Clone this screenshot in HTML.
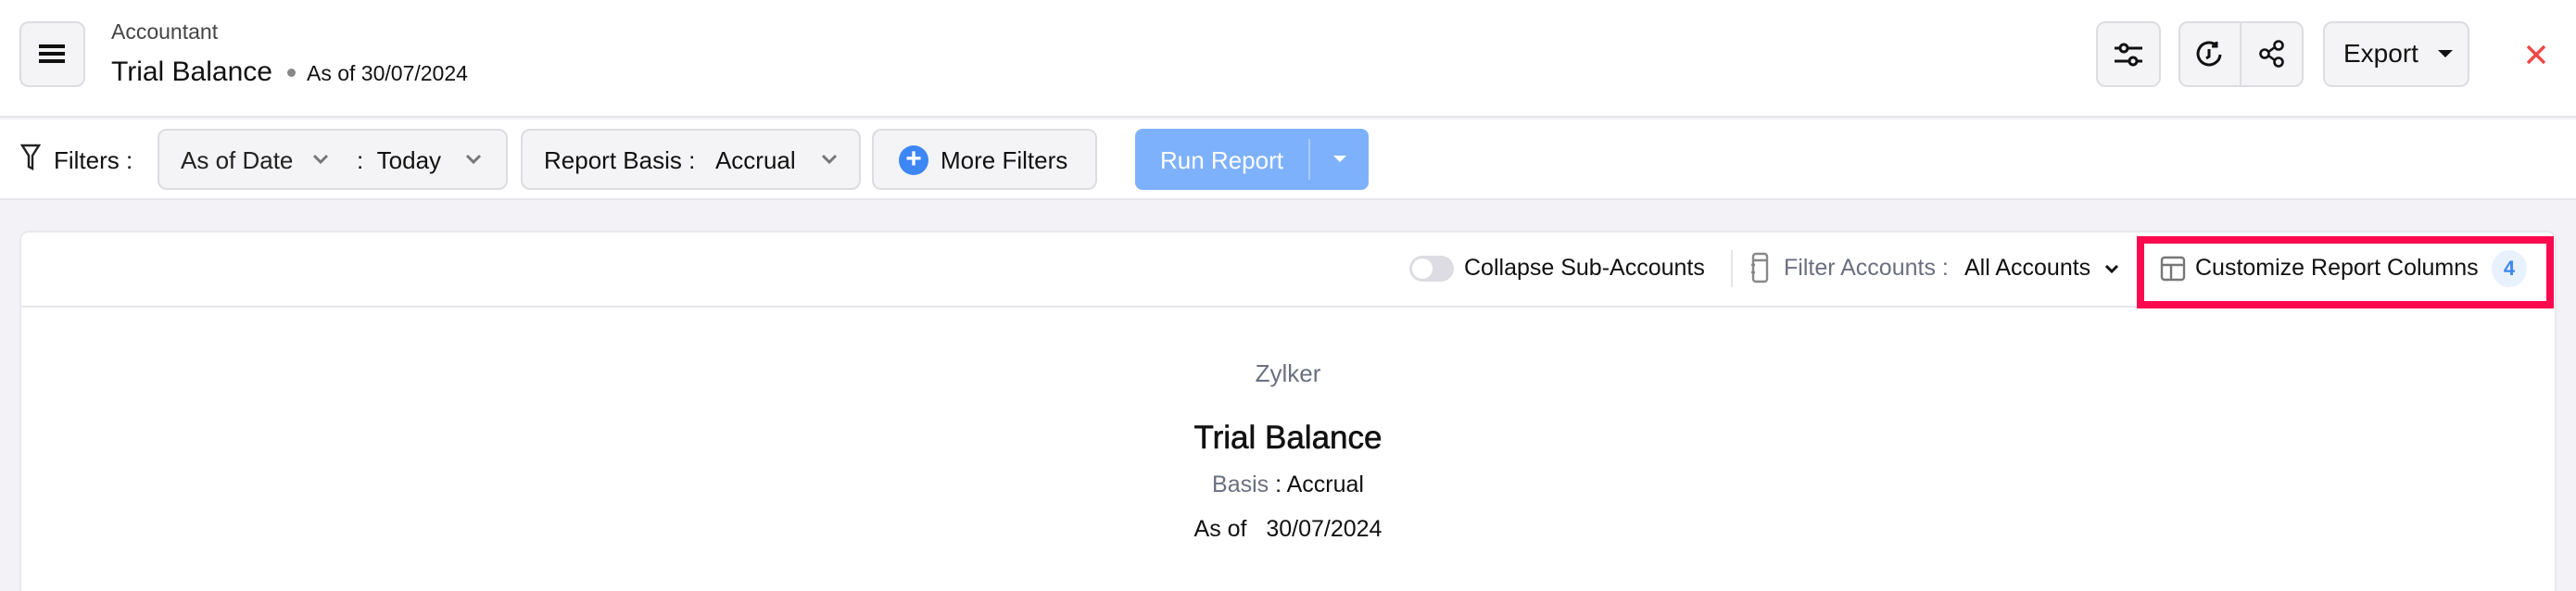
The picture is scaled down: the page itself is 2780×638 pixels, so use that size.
<!DOCTYPE html>
<html style="width:2780px;height:638px;overflow:hidden"><head><meta charset="utf-8"><style>
*{box-sizing:border-box;margin:0;padding:0}
body{width:2780px;height:638px;overflow:hidden;background:#f3f3f7;font-family:"Liberation Sans",sans-serif;color:#111;position:relative}
.a{position:absolute}
.btn{position:absolute;background:#f4f4f6;border:2px solid #dcdce2;border-radius:10px}
.t{position:absolute;white-space:nowrap;line-height:1}
</style></head><body>
<div class="a" style="left:0;top:0;width:2780px;height:127px;background:#fff;border-bottom:2px solid #e6e6ec"></div>
<div class="btn" style="left:21px;top:23px;width:71px;height:71px"></div>
<div class="a" style="left:42px;top:48px;width:28px;height:4px;background:#111;box-shadow:0 8px 0 #111,0 16px 0 #111"></div>
<div class="t" style="left:120px;top:23px;font-size:23px;color:#444">Accountant</div>
<div class="t" style="left:120px;top:63px;font-size:30px">Trial Balance</div>
<div class="a" style="left:310px;top:74px;width:9px;height:9px;border-radius:50%;background:#888"></div>
<div class="t" style="left:331px;top:68px;font-size:23px">As of 30/07/2024</div>

<div class="btn" style="left:2262px;top:23px;width:70px;height:71px"></div>
<svg class="a" style="left:2280px;top:42px" width="34" height="34" viewBox="0 0 34 34" fill="none" stroke="#111" stroke-width="3"><path d="M2 10h30M2 24h30"/><circle cx="12" cy="10" r="4" fill="#f4f4f6"/><circle cx="22" cy="24" r="4" fill="#f4f4f6"/></svg>
<div class="btn" style="left:2351px;top:23px;width:135px;height:71px"></div>
<div class="a" style="left:2417px;top:25px;width:2px;height:67px;background:#dcdce2"></div>
<svg class="a" style="left:2368px;top:43px" width="32" height="32" viewBox="0 0 32 32" fill="none" stroke="#111" stroke-width="3"><path d="M24 6A12 12 0 1 0 28 16"/><path d="M16 10v8l-3 2"/><path d="M24 2v5h-5"/></svg>
<svg class="a" style="left:2436px;top:42px" width="32" height="32" viewBox="0 0 32 32" fill="none" stroke="#111" stroke-width="2.6"><circle cx="8" cy="16" r="4.5"/><circle cx="23" cy="7" r="4.5"/><circle cx="23" cy="25" r="4.5"/><path d="M12 14l7-5M12 18l7 5"/></svg>
<div class="btn" style="left:2507px;top:23px;width:158px;height:71px"></div>
<div class="t" style="left:2529px;top:44px;font-size:28px">Export</div>
<div class="a" style="left:2631px;top:54px;border-left:8px solid transparent;border-right:8px solid transparent;border-top:8px solid #111"></div>
<svg class="a" style="left:2726px;top:48px" width="22" height="22" viewBox="0 0 22 22" stroke="#f04848" stroke-width="3.4"><path d="M2 2l18 18M20 2L2 20"/></svg>

<div class="a" style="left:0;top:129px;width:2780px;height:87px;background:#fff;border-bottom:2px solid #e6e6ec"></div>
<svg class="a" style="left:22px;top:155px" width="22" height="30" viewBox="0 0 22 30" fill="none" stroke="#222" stroke-width="2.4"><path d="M2 2h18l-7 11v14l-4-2V13z"/></svg>
<div class="t" style="left:58px;top:160px;font-size:26px">Filters :</div>
<div class="btn" style="left:170px;top:139px;width:378px;height:66px"></div>
<div class="t" style="left:195px;top:160px;font-size:26px;color:#222">As of Date</div>
<svg class="a" style="left:337px;top:166px" width="18" height="12" viewBox="0 0 18 12" fill="none" stroke="#777" stroke-width="3"><path d="M2 2l7 7 7-7"/></svg>
<div class="t" style="left:385px;top:160px;font-size:26px">:&nbsp;&nbsp;Today</div>
<svg class="a" style="left:502px;top:166px" width="18" height="12" viewBox="0 0 18 12" fill="none" stroke="#777" stroke-width="3"><path d="M2 2l7 7 7-7"/></svg>
<div class="btn" style="left:562px;top:139px;width:367px;height:66px"></div>
<div class="t" style="left:587px;top:160px;font-size:26px">Report Basis :&nbsp;&nbsp;&nbsp;Accrual</div>
<svg class="a" style="left:886px;top:166px" width="18" height="12" viewBox="0 0 18 12" fill="none" stroke="#777" stroke-width="3"><path d="M2 2l7 7 7-7"/></svg>
<div class="btn" style="left:941px;top:139px;width:243px;height:66px"></div>
<div class="a" style="left:970px;top:157px;width:32px;height:32px;border-radius:50%;background:#3d86f5;color:#fff;font-size:30px;line-height:30px;text-align:center;font-weight:bold">+</div>
<div class="t" style="left:1015px;top:160px;font-size:26px">More Filters</div>
<div class="a" style="left:1225px;top:139px;width:252px;height:66px;background:#7eb1fb;border-radius:8px"></div>
<div class="a" style="left:1412px;top:150px;width:2px;height:44px;background:#a8caf9"></div>
<div class="t" style="left:1252px;top:160px;font-size:26px;color:#fff">Run Report</div>
<div class="a" style="left:1439px;top:168px;border-left:7px solid transparent;border-right:7px solid transparent;border-top:7px solid #fff"></div>

<div class="a" style="left:21px;top:249px;width:2738px;height:389px;background:#fff;border:2px solid #e8e8ee;border-bottom:none;border-radius:10px 10px 0 0"></div>
<div class="a" style="left:23px;top:330px;width:2734px;height:2px;background:#e6e6ec"></div>
<div class="a" style="left:1521px;top:276px;width:48px;height:28px;border-radius:14px;background:#dcdce2"></div>
<div class="a" style="left:1524px;top:279px;width:22px;height:22px;border-radius:50%;background:#fff"></div>
<div class="t" style="left:1580px;top:277px;font-size:25px">Collapse Sub-Accounts</div>
<div class="a" style="left:1868px;top:270px;width:2px;height:40px;background:#e4e4ea"></div>
<svg class="a" style="left:1889px;top:272px" width="20" height="34" viewBox="0 0 20 34" fill="none" stroke="#888" stroke-width="2.4"><rect x="3" y="2" width="15" height="30" rx="3"/><path d="M3 9h15M1 14h4M1 22h4"/></svg>
<div class="t" style="left:1925px;top:277px;font-size:25px;color:#6b6f80">Filter Accounts :</div>
<div class="t" style="left:2120px;top:277px;font-size:25px">All Accounts</div>
<svg class="a" style="left:2271px;top:284px" width="16" height="12" viewBox="0 0 16 12" fill="none" stroke="#111" stroke-width="3"><path d="M2 3l6 6 6-6"/></svg>
<div class="a" style="left:2306px;top:255px;width:450px;height:78px;border:8px solid #fb0a50"></div>
<svg class="a" style="left:2331px;top:276px" width="28" height="28" viewBox="0 0 28 28" fill="none" stroke="#777" stroke-width="2.4"><rect x="2" y="2" width="24" height="24" rx="3"/><path d="M2 10h24M12 10v16"/></svg>
<div class="t" style="left:2369px;top:277px;font-size:25px">Customize Report Columns</div>
<div class="a" style="left:2689px;top:270px;width:38px;height:40px;border-radius:50%;background:#e8f1fe;color:#3d86f5;font-size:22px;font-weight:bold;line-height:40px;text-align:center">4</div>

<div class="t" style="left:0;width:2780px;text-align:center;top:390px;font-size:26px;color:#6b6f80">Zylker</div>
<div class="t" style="left:0;width:2780px;text-align:center;top:455px;font-size:35px;-webkit-text-stroke:0.6px #111">Trial Balance</div>
<div class="t" style="left:0;width:2780px;text-align:center;top:511px;font-size:25px"><span style="color:#6b6f80">Basis</span> : Accrual</div>
<div class="t" style="left:0;width:2780px;text-align:center;top:559px;font-size:25px">As of &nbsp; 30/07/2024</div>
</body></html>
